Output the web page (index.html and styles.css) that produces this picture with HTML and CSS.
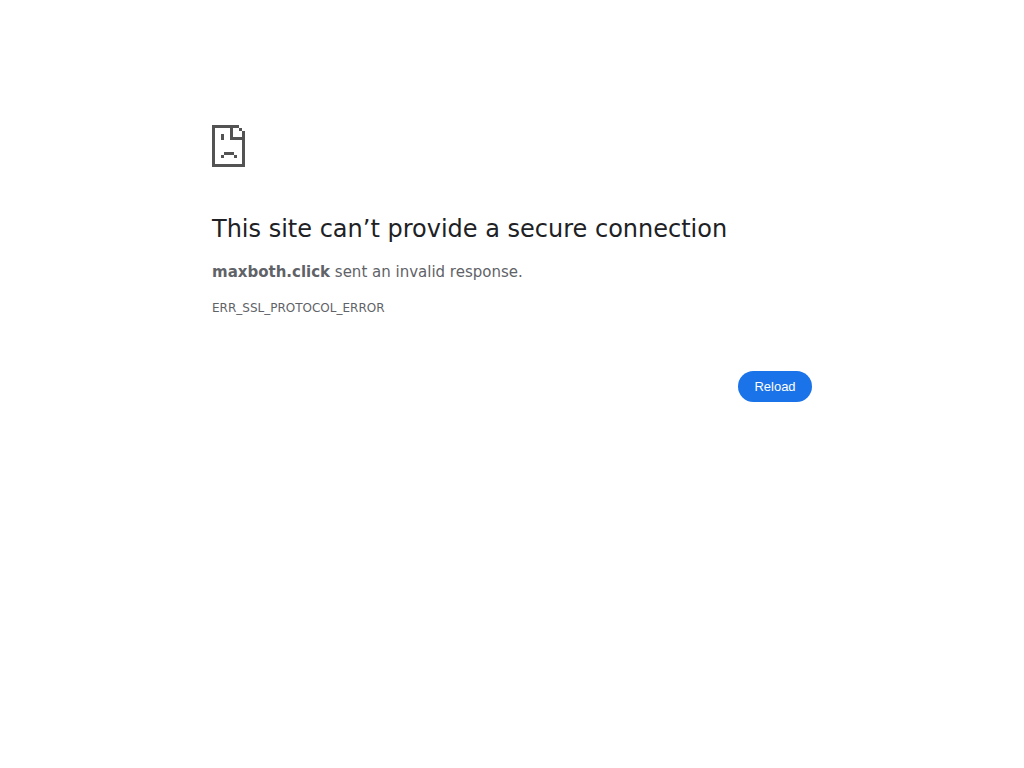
FILE: index.html
```html
<!DOCTYPE html>
<html lang="en">

<head>
    <meta charset="UTF-8">
    <meta name="viewport" content="width=device-width, initial-scale=1.0">
    <title>maxboth.click</title>
    <link rel="stylesheet" href="styles.css">
</head>

<body>
    <main class="error-page">
        <svg class="icon" viewBox="0 0 72 72" shape-rendering="crispEdges" aria-hidden="true">
            <!-- page outline with folded corner -->
            <path d="M0 17h27v3h-6v9h9v-6h3v36H0zM3 20v36h27V32H18V20z" fill-rule="evenodd" />
            <path d="M27 20h3v3h-3z" />
            <!-- sad face -->
            <path d="M9 26h3v6H9zM12 44h10v3H12zM9 47h3v3H9zM22 47h3v3h-3z" />
        </svg>
        <h1>This site can’t provide a secure connection</h1>
        <p class="summary"><strong>maxboth.click</strong> sent an invalid response.</p>
        <p class="error-code">ERR_SSL_PROTOCOL_ERROR</p>
        <div class="buttons">
            <button type="button" class="reload" onclick="location.reload()">Reload</button>
        </div>
    </main>
</body>

</html>
```

FILE: styles.css
```css
body {
    margin: 0;
    background-color: #ffffff;
    color: #5f6368;
    font-family: "DejaVu Sans", sans-serif;
    font-size: 15px;
    line-height: 24px;
}

.error-page {
    box-sizing: border-box;
    max-width: 600px;
    margin: 14vh auto 0;
}

.icon {
    display: block;
    width: 72px;
    height: 72px;
    fill: #535353;
}

h1 {
    margin: 34px 0 16px;
    color: #202124;
    font-size: 24px;
    font-weight: 500;
    line-height: 30px;
}

p {
    margin: 0;
}

.error-code {
    margin-top: 12px;
    font-size: 12px;
}

.buttons {
    display: flex;
    justify-content: flex-end;
    margin-top: 51px;
}

.reload {
    min-width: 74px;
    padding: 8px 16px;
    border: 0;
    border-radius: 20px;
    background-color: #1a73e8;
    color: #ffffff;
    font-family: "Liberation Sans", Arial, sans-serif;
    font-size: 13px;
    line-height: 15px;
    cursor: pointer;
}

.reload:hover {
    background-color: #1b66c9;
}
```
